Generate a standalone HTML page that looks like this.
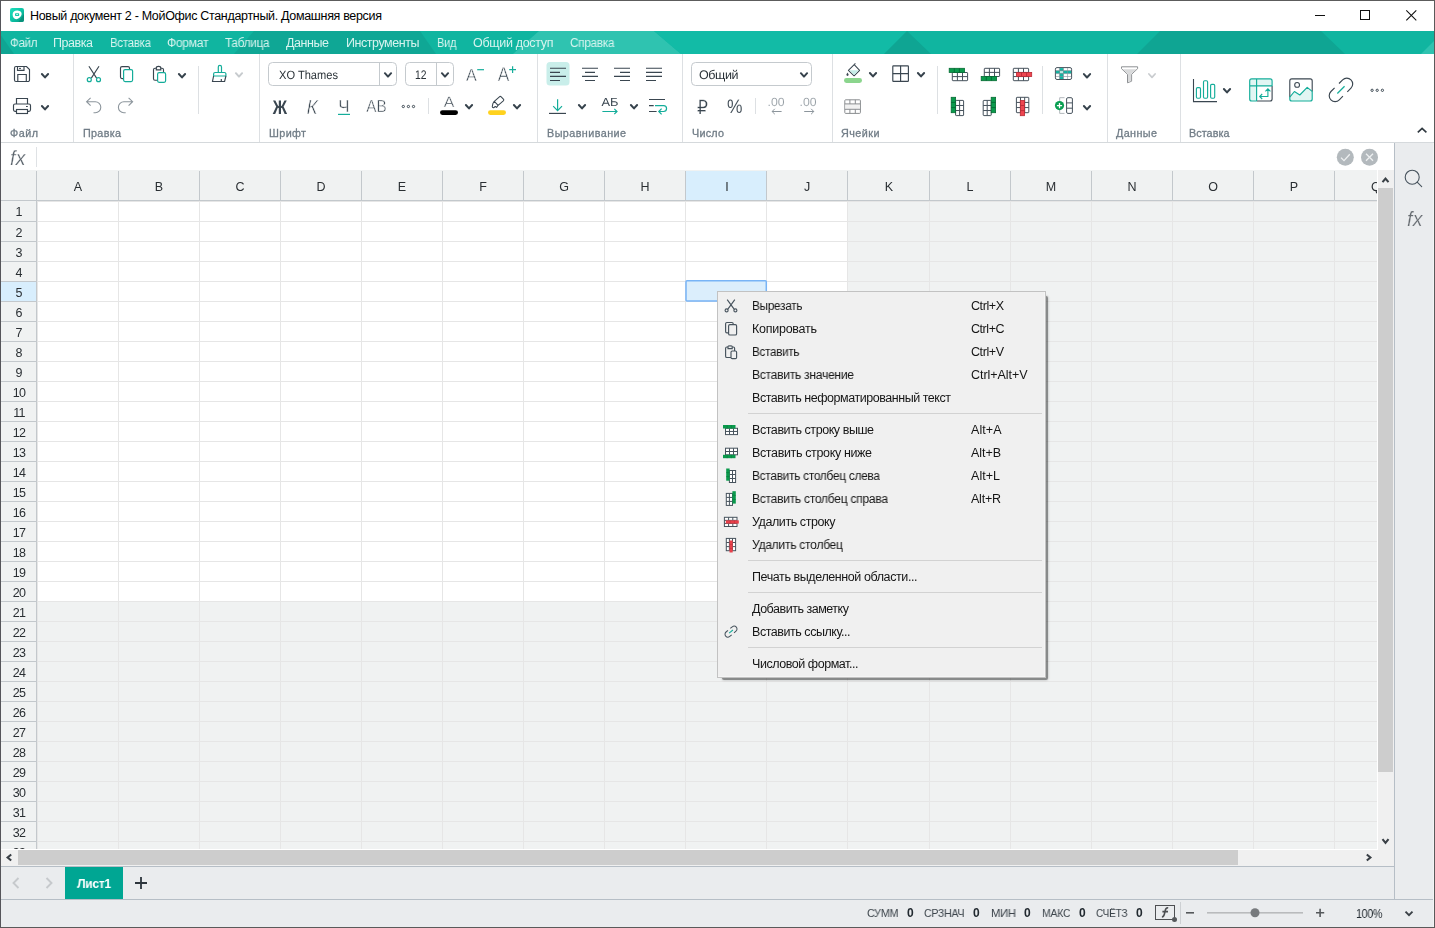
<!DOCTYPE html>
<html lang="ru"><head><meta charset="utf-8"><title>МойОфис Таблица</title>
<style>
html,body{margin:0;padding:0;}
body{width:1435px;height:928px;position:relative;overflow:hidden;background:#fff;font-family:"Liberation Sans", sans-serif;}
#app{position:absolute;left:0;top:0;width:1435px;height:928px;overflow:hidden;}
#app div, #app span.t, #app svg{position:absolute;}
span.t{white-space:nowrap;display:block;will-change:transform;}
#app svg{will-change:transform;}
#app span#t0{will-change:auto;}
svg text{text-rendering:geometricPrecision;}
svg{overflow:visible;}
</style></head><body><div id="app">
<div style="left:0px;top:0px;width:1435px;height:31px;background:#fff;"></div>
<svg style="left:10px;top:8px" width="14" height="14" viewBox="0 0 14 14">
<defs><linearGradient id="ig" x1="0" y1="0" x2="1" y2="1"><stop offset="0" stop-color="#1fe0bd"/><stop offset="0.5" stop-color="#0cc4a6"/><stop offset="1" stop-color="#069680"/></linearGradient></defs>
<rect x="0" y="0" width="14" height="14" rx="2.2" fill="url(#ig)"/><path d="M14 6 V11.8 A2.2 2.2 0 0 1 11.8 14 H8.5 Z" fill="#08917b"/>
<path d="M2.6 6.6 C2.6 3.6 4.8 2.2 7.6 2.4 C10.6 2.6 12 4.4 11.6 6.4 C11.3 8 9.5 9.8 7.8 10.8 C6.4 11.6 4.6 11.2 3.6 9.8 C2.9 8.8 2.6 7.8 2.6 6.6 Z" fill="#fff"/>
<rect x="5" y="5.2" width="4.2" height="2.8" rx="0.7" fill="#12c7a9"/><rect x="6.2" y="6.2" width="1.8" height="0.8" fill="#eafffb"/>
</svg>
<div style="left:1315px;top:15px;width:10px;height:1px;background:#111;"></div>
<div style="left:1360px;top:10px;width:10px;height:10px;background:transparent;border:1px solid #111;box-sizing:border-box;"></div>
<svg style="left:1405.5px;top:10px" width="11" height="11" viewBox="0 0 11 11"><path d="M0.3 0.3 L10.3 10.3 M10.3 0.3 L0.3 10.3" stroke="#111" stroke-width="1.1" fill="none"/></svg>
<div style="left:0px;top:31px;width:1435px;height:23px;background:#10b5a0;"></div>
<svg style="left:0;top:31px" width="1435" height="23" viewBox="0 0 1435 23">
<polygon points="0,3 0,23 14,23" fill="#0fa593"/>
<polygon points="254,0 420,0 436,23 234,23" fill="#0fa593" opacity="0.9"/>
<polygon points="539,0 654,0 681,23 513,23" fill="#2fc3b0"/>
<polygon points="654,0 907,0 884,23 681,23" fill="#12bba6"/>
<polygon points="907,0 931,23 884,23" fill="#0fa593"/>
<polygon points="1160,0 1321,0 1345,23 1137,23" fill="#0fa593"/>
<polygon points="1435,9 1435,23 1421,23" fill="#2fc3b0"/>
</svg>
<div style="left:0px;top:54px;width:1435px;height:88px;background:#fff;"></div>
<div style="left:0px;top:142px;width:1435px;height:1px;background:#d5d9dc;"></div>
<div style="left:73px;top:54px;width:1px;height:88px;background:#dde0e3;"></div>
<div style="left:259px;top:54px;width:1px;height:88px;background:#dde0e3;"></div>
<div style="left:537px;top:54px;width:1px;height:88px;background:#dde0e3;"></div>
<div style="left:682px;top:54px;width:1px;height:88px;background:#dde0e3;"></div>
<div style="left:832px;top:54px;width:1px;height:88px;background:#dde0e3;"></div>
<div style="left:1107px;top:54px;width:1px;height:88px;background:#dde0e3;"></div>
<div style="left:1180px;top:54px;width:1px;height:88px;background:#dde0e3;"></div>
<div style="left:198px;top:66px;width:1px;height:48px;background:#dde0e3;"></div>
<div style="left:937px;top:66px;width:1px;height:48px;background:#dde0e3;"></div>
<div style="left:1042px;top:66px;width:1px;height:48px;background:#dde0e3;"></div>
<div style="left:428px;top:98px;width:1px;height:16px;background:#dde0e3;"></div>
<div style="left:755px;top:98px;width:1px;height:16px;background:#dde0e3;"></div>
<svg style="left:0;top:54px" width="1435" height="88" viewBox="0 54 1435 88"><path d="M16 66.5 H26.5 L29.5 69.5 V80 A1.5 1.5 0 0 1 28 81.5 H16 A1.5 1.5 0 0 1 14.5 80 V68 A1.5 1.5 0 0 1 16 66.5 Z" fill="none" stroke="#3a4650" stroke-width="1.15"/><path d="M17.5 66.5 V70.3 H24 V66.5" fill="none" stroke="#3a4650" stroke-width="1.15"/><path d="M19 68.4 H21" stroke="#3a4650" stroke-width="1"/><path d="M17.8 81.5 V74.5 H26.3 V81.5" fill="none" stroke="#3a4650" stroke-width="1.15"/><path d="M41.9 74.0 L45.0 77.4 L48.1 74.0" stroke="#36424c" stroke-width="2" fill="none" stroke-linecap="round" stroke-linejoin="round"/><path d="M16.5 104 V98.5 H27.5 V104" fill="none" stroke="#3a4650" stroke-width="1.15"/><path d="M16.5 111.3 H15 A1.5 1.5 0 0 1 13.5 109.8 V105.5 A1.5 1.5 0 0 1 15 104 H29 A1.5 1.5 0 0 1 30.5 105.5 V109.8 A1.5 1.5 0 0 1 29 111.3 H27.5" fill="none" stroke="#3a4650" stroke-width="1.15"/><rect x="16.5" y="109.5" width="11" height="4" fill="none" stroke="#3a4650" stroke-width="1.15"/><path d="M26 106.5 H27.8" stroke="#3a4650" stroke-width="1"/><path d="M41.9 106.0 L45.0 109.4 L48.1 106.0" stroke="#36424c" stroke-width="2" fill="none" stroke-linecap="round" stroke-linejoin="round"/><path d="M88.9 66.2 L96.6 78.1 M99 66.2 L91.3 78.1" stroke="#3a4650" stroke-width="1.15" fill="none"/><circle cx="89.3" cy="79.7" r="2" fill="none" stroke="#14ad9a" stroke-width="1.2"/><circle cx="98.5" cy="79.7" r="2" fill="none" stroke="#14ad9a" stroke-width="1.2"/><rect x="120.5" y="66.6" width="9" height="12" rx="1.5" fill="none" stroke="#3a4650" stroke-width="1.15"/><rect x="123.6" y="69.6" width="9" height="12" rx="1.5" fill="#fff" stroke="#14ad9a" stroke-width="1.2"/><rect x="153.5" y="68.2" width="10" height="12" rx="1.5" fill="none" stroke="#3a4650" stroke-width="1.15"/><path d="M156.3 69.8 V68 C156.3 65.8 160.8 65.8 160.8 68 V69.8 Z" fill="#fff" stroke="#3a4650" stroke-width="1.15"/><rect x="157.6" y="72.7" width="8" height="9.6" rx="1.5" fill="#fff" stroke="#14ad9a" stroke-width="1.2"/><path d="M178.9 74.0 L182.0 77.4 L185.1 74.0" stroke="#36424c" stroke-width="2" fill="none" stroke-linecap="round" stroke-linejoin="round"/><path d="M218.3 72.5 V67 A1.6 1.6 0 0 1 221.5 67 V72.5" fill="none" stroke="#14ad9a" stroke-width="1.2"/><path d="M213.6 76 V74 A1.5 1.5 0 0 1 215.1 72.5 H224.4 A1.5 1.5 0 0 1 225.9 74 V76 Z" fill="none" stroke="#14ad9a" stroke-width="1.2"/><path d="M213.6 76 L212.5 81.5 H224.6 L225.9 76 M221.3 81.5 V79" fill="none" stroke="#3a4650" stroke-width="1.15"/><path d="M235.9 73.2 L239.0 76.60000000000001 L242.1 73.2" stroke="#c7cbce" stroke-width="2" fill="none" stroke-linecap="round" stroke-linejoin="round"/><path d="M90.6 97.8 L86.6 101.7 L90.6 105.6 M86.8 101.7 H95.3 A5.5 5.5 0 0 1 95.3 112.7 H93.5" fill="none" stroke="#8c959c" stroke-width="1.1"/><path d="M128.6 97.8 L132.6 101.7 L128.6 105.6 M132.4 101.7 H123.9 A5.5 5.5 0 0 0 123.9 112.7 H125.7" fill="none" stroke="#8c959c" stroke-width="1.1"/><rect x="268.5" y="62.5" width="128" height="23" rx="4" fill="#fff" stroke="#c5cace" stroke-width="1"/><path d="M379.5 63 V85" stroke="#c5cace" stroke-width="1"/><text x="279" y="78.8" font-family="Liberation Sans, sans-serif" font-size="12" font-weight="normal" font-style="normal" fill="#2a3238" text-anchor="start" textLength="59" lengthAdjust="spacingAndGlyphs">XO Thames</text><path d="M384.9 73.2 L388.0 76.60000000000001 L391.1 73.2" stroke="#36424c" stroke-width="2" fill="none" stroke-linecap="round" stroke-linejoin="round"/><rect x="405.5" y="62.5" width="48" height="23" rx="4" fill="#fff" stroke="#c5cace" stroke-width="1"/><path d="M436.5 63 V85" stroke="#c5cace" stroke-width="1"/><text x="415" y="78.8" font-family="Liberation Sans, sans-serif" font-size="12.5" font-weight="normal" font-style="normal" fill="#2a3238" text-anchor="start" textLength="11.5" lengthAdjust="spacingAndGlyphs">12</text><path d="M441.9 73.2 L445.0 76.60000000000001 L448.1 73.2" stroke="#36424c" stroke-width="2" fill="none" stroke-linecap="round" stroke-linejoin="round"/><text x="471.5" y="81.4" font-family="Liberation Sans, sans-serif" font-size="17.5" font-weight="normal" font-style="normal" fill="#3a4650" text-anchor="middle" stroke="#fff" stroke-width="0.5" textLength="10.8" lengthAdjust="spacingAndGlyphs">A</text><path d="M477.2 69.7 H484" stroke="#14ad9a" stroke-width="1.2"/><text x="503.5" y="81.4" font-family="Liberation Sans, sans-serif" font-size="20" font-weight="normal" font-style="normal" fill="#3a4650" text-anchor="middle" stroke="#fff" stroke-width="0.6" textLength="11.6" lengthAdjust="spacingAndGlyphs">A</text><path d="M509.2 69.7 H516 M512.6 66.3 V73.1" stroke="#14ad9a" stroke-width="1.2"/><text x="280" y="113.7" font-family="Liberation Sans, sans-serif" font-size="19.8" font-weight="bold" font-style="normal" fill="#3a4650" text-anchor="middle" textLength="14.3" lengthAdjust="spacingAndGlyphs">Ж</text><text x="312" y="113.6" font-family="Liberation Sans, sans-serif" font-size="20.3" font-weight="normal" font-style="italic" fill="#3a4650" text-anchor="middle" stroke="#fff" stroke-width="0.6" textLength="11.2" lengthAdjust="spacingAndGlyphs">К</text><text x="344" y="111.5" font-family="Liberation Sans, sans-serif" font-size="17.6" font-weight="normal" font-style="normal" fill="#3a4650" text-anchor="middle" stroke="#fff" stroke-width="0.5" textLength="11.3" lengthAdjust="spacingAndGlyphs">Ч</text><path d="M338 114.4 H350" stroke="#14ad9a" stroke-width="1.2"/><text x="376.5" y="111.6" font-family="Liberation Sans, sans-serif" font-size="17.4" font-weight="normal" font-style="normal" fill="#3a4650" text-anchor="middle" stroke="#fff" stroke-width="0.5" textLength="20.4" lengthAdjust="spacingAndGlyphs">АВ</text><circle cx="403.3" cy="106.5" r="1.15" fill="none" stroke="#3a4650" stroke-width="1"/><circle cx="408.4" cy="106.5" r="1.15" fill="none" stroke="#3a4650" stroke-width="1"/><circle cx="413.5" cy="106.5" r="1.15" fill="none" stroke="#3a4650" stroke-width="1"/><text x="449" y="107.3" font-family="Liberation Sans, sans-serif" font-size="15" font-weight="normal" font-style="normal" fill="#3a4650" text-anchor="middle" stroke="#fff" stroke-width="0.4" textLength="10.6" lengthAdjust="spacingAndGlyphs">A</text><rect x="440" y="110.2" width="18" height="4.7" rx="2.35" fill="#000"/><path d="M465.9 105.0 L469.0 108.4 L472.1 105.0" stroke="#36424c" stroke-width="2" fill="none" stroke-linecap="round" stroke-linejoin="round"/><path d="M494.3 101.3 L499.4 96.8 Q500.3 96 501.2 96.9 L503.4 99.2 Q504.2 100.1 503.3 100.9 L498.1 105.3 Z M494.3 101.3 L492.9 103.6 L492.3 106.3 Q492.2 107.8 493.6 107.7 L495.3 106.5 L496.6 107.4 L498.1 105.3" fill="none" stroke="#3a4650" stroke-width="1.05" stroke-linejoin="round"/><rect x="488" y="110.2" width="18" height="4.7" rx="2.35" fill="#ffd21e"/><path d="M513.9 105.0 L517.0 108.4 L520.1 105.0" stroke="#36424c" stroke-width="2" fill="none" stroke-linecap="round" stroke-linejoin="round"/><rect x="546.5" y="62" width="23" height="23.5" rx="3.5" fill="#c9eeea"/><path d="M550 68.2 H566 M550 72.3 H560 M550 76.4 H566 M550 80.5 H560 " stroke="#3a4650" stroke-width="1.15" fill="none"/><path d="M582 68.2 H598 M585 72.3 H595 M582 76.4 H598 M585 80.5 H595 " stroke="#3a4650" stroke-width="1.15" fill="none"/><path d="M614 68.2 H630 M620 72.3 H630 M614 76.4 H630 M620 80.5 H630 " stroke="#3a4650" stroke-width="1.15" fill="none"/><path d="M646 68.2 H662 M646 72.3 H662 M646 76.4 H662 M646 80.5 H656 " stroke="#3a4650" stroke-width="1.15" fill="none"/><path d="M557.6 99.2 V110.5 M553.2 106.2 L557.6 110.6 L562 106.2" stroke="#14ad9a" stroke-width="1.2" fill="none"/><path d="M549 113.4 H566" stroke="#3a4650" stroke-width="1.15"/><path d="M578.9 105.0 L582.0 108.4 L585.1 105.0" stroke="#36424c" stroke-width="2" fill="none" stroke-linecap="round" stroke-linejoin="round"/><text x="610" y="106.2" font-family="Liberation Sans, sans-serif" font-size="11.8" font-weight="normal" font-style="normal" fill="#3a4650" text-anchor="middle" textLength="17" lengthAdjust="spacingAndGlyphs">АБ</text><path d="M602.4 111.5 H617 M614.3 108.9 L617 111.5 L614.3 114.1" stroke="#14ad9a" stroke-width="1.2" fill="none"/><path d="M630.9 105.0 L634.0 108.4 L637.1 105.0" stroke="#36424c" stroke-width="2" fill="none" stroke-linecap="round" stroke-linejoin="round"/><path d="M649 99.5 H665 M649 105.6 H653.7 M649 111.5 H656.6" stroke="#3a4650" stroke-width="1.15" fill="none"/><path d="M655 105.6 H663.6 A2.95 2.95 0 0 1 663.6 111.5 H659 M661.6 108.7 L658.8 111.5 L661.6 114.3" stroke="#14ad9a" stroke-width="1.2" fill="none"/><rect x="691.5" y="62.5" width="120" height="23" rx="4" fill="#fff" stroke="#c5cace" stroke-width="1"/><text x="699" y="78.8" font-family="Liberation Sans, sans-serif" font-size="12.5" font-weight="normal" font-style="normal" fill="#2a3238" text-anchor="start" textLength="39.5" lengthAdjust="spacing">Общий</text><path d="M800.9 73.2 L804.0 76.60000000000001 L807.1 73.2" stroke="#36424c" stroke-width="2" fill="none" stroke-linecap="round" stroke-linejoin="round"/><text x="702.5" y="113.8" font-family="DejaVu Sans, sans-serif" font-size="19.5" fill="#3a4650" text-anchor="middle" textLength="11" lengthAdjust="spacingAndGlyphs" stroke="#fff" stroke-width="0.25">₽</text><text x="734.7" y="113" font-family="Liberation Sans, sans-serif" font-size="19.5" font-weight="normal" font-style="normal" fill="#3a4650" text-anchor="middle" stroke="#fff" stroke-width="0.1" textLength="15.5" lengthAdjust="spacingAndGlyphs">%</text><text x="776" y="106.2" font-family="Liberation Sans, sans-serif" font-size="12" font-weight="normal" font-style="normal" fill="#8c959c" text-anchor="middle" stroke="#fff" stroke-width="0.15" textLength="17" lengthAdjust="spacingAndGlyphs">.00</text><path d="M772.1 111.5 H781.6 M774.8 108.8 L772.1 111.5 L774.8 114.2" stroke="#8c959c" stroke-width="1" fill="none"/><text x="808" y="106.2" font-family="Liberation Sans, sans-serif" font-size="12" font-weight="normal" font-style="normal" fill="#8c959c" text-anchor="middle" stroke="#fff" stroke-width="0.15" textLength="17" lengthAdjust="spacingAndGlyphs">.00</text><path d="M804.2 111.5 H813.8 M811.1 108.8 L813.8 111.5 L811.1 114.2" stroke="#8c959c" stroke-width="1" fill="none"/><path d="M848.4 70.4 L854.2 64.7 L859.6 70.4 L854.1 75.8 Z" fill="#fff" stroke="#3a4650" stroke-width="1.05" stroke-linejoin="round"/><path d="M849.3 70.3 H858.7 L854.1 74.9 Z" fill="#c4ece7"/><path d="M854.2 64.7 L855.4 63.4" stroke="#3a4650" stroke-width="1.05"/><path d="M847.5 72.4 C846.6 73.8 846.4 74.4 846.4 74.8 A1.1 1.1 0 0 0 848.6 74.8 C848.6 74.4 848.4 73.8 847.5 72.4 Z" fill="#3a4650"/><rect x="844" y="78.1" width="18" height="4.8" rx="2.4" fill="#8bd58d"/><path d="M869.9 73.0 L873.0 76.4 L876.1 73.0" stroke="#36424c" stroke-width="2" fill="none" stroke-linecap="round" stroke-linejoin="round"/><rect x="892.8" y="65.8" width="15.6" height="15.6" rx="0.6" fill="none" stroke="#3a4650" stroke-width="1.15"/><path d="M900.6 65.8 V81.4 M892.8 73.6 H908.4" stroke="#3a4650" stroke-width="1.15"/><path d="M917.9 73.0 L921.0 76.4 L924.1 73.0" stroke="#36424c" stroke-width="2" fill="none" stroke-linecap="round" stroke-linejoin="round"/><rect x="844.8" y="99.8" width="15.6" height="13.6" rx="0.8" fill="#fff" stroke="#8a8d90" stroke-width="1"/><rect x="845.3" y="104.2" width="14.6" height="4.8" fill="#f1f1f1"/><path d="M844.8 103.9 H860.4 M844.8 109.3 H860.4 M849.9 99.8 V103.9 M855.3 99.8 V103.9 M849.9 109.3 V113.4 M855.3 109.3 V113.4" stroke="#8a8d90" stroke-width="1" fill="none"/><rect x="952.3" y="72.5" width="15.3" height="8.2" rx="0.6" fill="#fff" stroke="#46525c" stroke-width="1.0"/><path d="M957.40 72.5 V80.7 M962.50 72.5 V80.7 M952.3 76.60 H967.5999999999999 " stroke="#46525c" stroke-width="1.0" fill="none"/><rect x="949.2" y="68.3" width="15.3" height="4.2" fill="#0a9a4c" stroke="#056b33" stroke-width="0.8"/><path d="M954.30 68.3 V72.5 M959.40 68.3 V72.5 " stroke="#056b33" stroke-width="0.9" fill="none"/><rect x="984.3" y="68.3" width="15.3" height="8.2" rx="0.6" fill="#fff" stroke="#46525c" stroke-width="1.0"/><path d="M989.40 68.3 V76.5 M994.50 68.3 V76.5 M984.3 72.40 H999.5999999999999 " stroke="#46525c" stroke-width="1.0" fill="none"/><rect x="981.2" y="76.5" width="15.3" height="4.2" fill="#0a9a4c" stroke="#056b33" stroke-width="0.8"/><path d="M986.30 76.5 V80.7 M991.40 76.5 V80.7 " stroke="#056b33" stroke-width="0.9" fill="none"/><rect x="1013.3" y="68.3" width="15.3" height="12.4" rx="0.6" fill="#fff" stroke="#46525c" stroke-width="1.0"/><path d="M1018.40 68.3 V80.7 M1023.50 68.3 V80.7 M1013.3 72.43 H1028.6 M1013.3 76.57 H1028.6 " stroke="#46525c" stroke-width="1.0" fill="none"/><rect x="1016.4" y="72.4" width="15.3" height="4.2" fill="#ee4650" stroke="#b82a35" stroke-width="0.8"/><path d="M1021.50 72.4 V76.60000000000001 M1026.60 72.4 V76.60000000000001 " stroke="#b82a35" stroke-width="0.9" fill="none"/><rect x="1055.4" y="67.6" width="16.2" height="11.9" rx="1.6" fill="#fff" stroke="#46525c" stroke-width="1"/><rect x="1059.5" y="68.1" width="4" height="10.9" fill="#12b3a0"/><rect x="1055.9" y="70.6" width="15.2" height="3" fill="#12b3a0"/><rect x="1060" y="71" width="3" height="2.2" fill="#bfe9e4"/><path d="M1059.45 68 V79 M1063.5 68 V79 M1067.55 68 V79 M1055.9 70.6 H1071.1 M1055.9 73.6 H1071.1 M1055.9 76.5 H1071.1" stroke="#87919a" stroke-width="0.6" fill="none"/><path d="M1083.9 74.1 L1087.0 77.5 L1090.1 74.1" stroke="#36424c" stroke-width="2" fill="none" stroke-linecap="round" stroke-linejoin="round"/><rect x="955.6" y="100.4" width="8" height="15.2" rx="0.6" fill="#fff" stroke="#46525c" stroke-width="1.0"/><path d="M959.60 100.4 V115.60000000000001 M955.6 105.47 H963.6 M955.6 110.53 H963.6 " stroke="#46525c" stroke-width="1.0" fill="none"/><rect x="951.2" y="97.3" width="4.4" height="15.4" fill="#0a9a4c" stroke="#056b33" stroke-width="0.8"/><path d="M951.2 102.43 H955.6 M951.2 107.57 H955.6 " stroke="#056b33" stroke-width="0.9" fill="none"/><rect x="983.2" y="100.4" width="8" height="15.2" rx="0.6" fill="#fff" stroke="#46525c" stroke-width="1.0"/><path d="M987.20 100.4 V115.60000000000001 M983.2 105.47 H991.2 M983.2 110.53 H991.2 " stroke="#46525c" stroke-width="1.0" fill="none"/><rect x="991.2" y="97.3" width="4.4" height="15.4" fill="#0a9a4c" stroke="#056b33" stroke-width="0.8"/><path d="M991.2 102.43 H995.6 M991.2 107.57 H995.6 " stroke="#056b33" stroke-width="0.9" fill="none"/><rect x="1016.4" y="97.3" width="12.4" height="15.4" rx="0.6" fill="#fff" stroke="#46525c" stroke-width="1.0"/><path d="M1020.53 97.3 V112.7 M1024.67 97.3 V112.7 M1016.4 102.43 H1028.8 M1016.4 107.57 H1028.8 " stroke="#46525c" stroke-width="1.0" fill="none"/><rect x="1020.3" y="100.4" width="4.3" height="15.3" fill="#ee4650" stroke="#b82a35" stroke-width="0.8"/><path d="M1020.3 105.50 H1024.6 M1020.3 110.60 H1024.6 " stroke="#b82a35" stroke-width="0.9" fill="none"/><path d="M1064.5 97.7 H1059.7 V113.4 H1064.5" fill="none" stroke="#a9afb4" stroke-width="0.9"/><rect x="1066.6" y="97.7" width="5.8" height="15.7" rx="1.3" fill="#fff" stroke="#46525c" stroke-width="1"/><path d="M1066.6 102.9 H1072.4 M1066.6 108.2 H1072.4" stroke="#46525c" stroke-width="1"/><circle cx="1059.5" cy="105.6" r="4.6" fill="#0a9f52"/><path d="M1056.9 105.6 H1062.1 M1059.5 103 V108.2" stroke="#fff" stroke-width="1.3"/><path d="M1083.9 106.0 L1087.0 109.4 L1090.1 106.0" stroke="#36424c" stroke-width="2" fill="none" stroke-linecap="round" stroke-linejoin="round"/><path d="M1121.5 66.8 H1137.6 V68.7 L1131.6 74.3 V81.2 L1127.5 82.8 V74.3 L1121.5 68.7 Z" fill="#fff" stroke="#8d9093" stroke-width="1" stroke-linejoin="round"/><path d="M1122.6 69.2 H1136.5 L1131.1 74.1 V80.9 L1128 82.1 V74.1 Z" fill="#d9dadb"/><path d="M1148.9 74.0 L1152.0 77.4 L1155.1 74.0" stroke="#c9cccf" stroke-width="1.7" fill="none" stroke-linecap="round" stroke-linejoin="round"/><path d="M1193.5 79 V101.6 H1217" fill="none" stroke="#3a4650" stroke-width="1.1"/><rect x="1196.4" y="87.6" width="4.1" height="10.6" rx="1.2" fill="none" stroke="#14ad9a" stroke-width="1.15"/><rect x="1203.5" y="80.7" width="4.1" height="17.5" rx="1.2" fill="none" stroke="#14ad9a" stroke-width="1.15"/><rect x="1210.6" y="84.4" width="4.1" height="13.8" rx="1.2" fill="none" stroke="#14ad9a" stroke-width="1.15"/><path d="M1223.9 89.0 L1227.0 92.4 L1230.1 89.0" stroke="#36424c" stroke-width="2" fill="none" stroke-linecap="round" stroke-linejoin="round"/><path d="M1256.6 101 H1251.7 A2 2 0 0 1 1249.7 99 V80.9 A2 2 0 0 1 1251.7 78.9 H1270.1 A2 2 0 0 1 1272.1 80.9 V85.9 H1256.6 Z" fill="#e2f6f3"/><path d="M1272.1 85.9 V99 A2 2 0 0 1 1270.1 101 H1256.6" fill="none" stroke="#3a4650" stroke-width="1.1"/><path d="M1256.6 101 H1251.7 A2 2 0 0 1 1249.7 99 V80.9 A2 2 0 0 1 1251.7 78.9 H1270.1 A2 2 0 0 1 1272.1 80.9 V85.9 M1256.6 78.9 V101 M1249.7 85.9 H1272.1" fill="none" stroke="#14ad9a" stroke-width="1.15"/><path d="M1267.9 89 V96.5 H1259.8 M1265.4 91.4 L1267.9 88.9 L1270.4 91.4 M1262.2 94 L1259.7 96.5 L1262.2 99" fill="none" stroke="#14ad9a" stroke-width="1.1"/><path d="M1289.8 97.2 L1294.4 91.5 L1299.8 95 L1307.2 87.4 L1312.2 91.4 V99 A2 2 0 0 1 1310.2 101 H1291.8 A2 2 0 0 1 1289.8 99 Z" fill="#e2f6f3"/><path d="M1289.8 97.2 V80.9 A2 2 0 0 1 1291.8 78.9 H1310.2 A2 2 0 0 1 1312.2 80.9 V91.4" fill="none" stroke="#3a4650" stroke-width="1.1"/><circle cx="1297.1" cy="84.9" r="2.4" fill="none" stroke="#3a4650" stroke-width="1.05"/><path d="M1289.8 97.2 L1294.4 91.5 L1299.8 95 L1307.2 87.4 L1312.2 91.4 V99 A2 2 0 0 1 1310.2 101 H1291.8 A2 2 0 0 1 1289.8 99 Z" fill="none" stroke="#14ad9a" stroke-width="1.15" stroke-linejoin="round"/><g transform="translate(1340.95 89.85) rotate(-45)"><path d="M3.1 -5.9 H8.27 A5.9 5.9 0 0 1 8.27 5.9 H3.1 M-3.1 5.9 H-8.27 A5.9 5.9 0 0 1 -8.27 -5.9 H-3.1" fill="none" stroke="#3a4650" stroke-width="1.15"/><path d="M-5.1 0 H5.1" stroke="#14ad9a" stroke-width="1.2"/></g><circle cx="1372.1" cy="90.3" r="1.15" fill="none" stroke="#3a4650" stroke-width="1"/><circle cx="1377.2" cy="90.3" r="1.15" fill="none" stroke="#3a4650" stroke-width="1"/><circle cx="1382.4" cy="90.3" r="1.15" fill="none" stroke="#3a4650" stroke-width="1"/><path d="M1417.8 132.4 L1422.1 128.3 L1426.4 132.4" fill="none" stroke="#2f383f" stroke-width="1.6"/></svg>
<div style="left:0px;top:143px;width:1394px;height:27px;background:#fff;"></div>
<div style="left:36px;top:147px;width:1px;height:20px;background:#dfe2e5;"></div>
<svg style="left:1336px;top:148px" width="44" height="19" viewBox="1336 148 44 19"><circle cx="1345.3" cy="157.3" r="8.5" fill="#b3b9bd"/><path d="M1341 157.6 L1344 160.6 L1349.8 154.2" stroke="#eef0f1" stroke-width="1.3" fill="none"/><circle cx="1369.5" cy="157.3" r="8.5" fill="#b3b9bd"/><path d="M1366 153.8 L1373 160.8 M1373 153.8 L1366 160.8" stroke="#eef0f1" stroke-width="1.3" fill="none"/></svg>
<div style="left:1394px;top:143px;width:41px;height:757px;background:#eaecee;"></div>
<div style="left:1394px;top:143px;width:1px;height:757px;background:#b6bec6;"></div>
<svg style="left:1400px;top:165px" width="30" height="70" viewBox="1400 165 30 70"><circle cx="1412.2" cy="177.2" r="7" fill="none" stroke="#47535d" stroke-width="1.1"/><path d="M1417.2 182.2 L1421.7 186.7" stroke="#47535d" stroke-width="1.1" stroke-linecap="round"/></svg>
<div style="left:0px;top:170px;width:1377px;height:679px;background:#f0f2f2;"></div>
<div style="left:38px;top:202px;width:809px;height:399px;background:#fff;"></div>
<div style="left:686px;top:171px;width:80px;height:29px;background:#d8eefd;"></div>
<div style="left:1px;top:282px;width:35px;height:19px;background:#d8eefd;"></div>
<svg style="left:0;top:170px" width="1377" height="679" viewBox="0 170 1377 679" shape-rendering="crispEdges"><rect x="37" y="201" width="1" height="648" fill="#e6e6e6"/><rect x="118" y="201" width="1" height="648" fill="#e6e6e6"/><rect x="199" y="201" width="1" height="648" fill="#e6e6e6"/><rect x="280" y="201" width="1" height="648" fill="#e6e6e6"/><rect x="361" y="201" width="1" height="648" fill="#e6e6e6"/><rect x="442" y="201" width="1" height="648" fill="#e6e6e6"/><rect x="523" y="201" width="1" height="648" fill="#e6e6e6"/><rect x="604" y="201" width="1" height="648" fill="#e6e6e6"/><rect x="685" y="201" width="1" height="648" fill="#e6e6e6"/><rect x="766" y="201" width="1" height="648" fill="#e6e6e6"/><rect x="847" y="201" width="1" height="648" fill="#e6e6e6"/><rect x="929" y="201" width="1" height="648" fill="#e6e6e6"/><rect x="1010" y="201" width="1" height="648" fill="#e6e6e6"/><rect x="1091" y="201" width="1" height="648" fill="#e6e6e6"/><rect x="1172" y="201" width="1" height="648" fill="#e6e6e6"/><rect x="1253" y="201" width="1" height="648" fill="#e6e6e6"/><rect x="1334" y="201" width="1" height="648" fill="#e6e6e6"/><rect x="37" y="201" width="1340" height="1" fill="#e6e6e6"/><rect x="37" y="221" width="1340" height="1" fill="#e6e6e6"/><rect x="37" y="241" width="1340" height="1" fill="#e6e6e6"/><rect x="37" y="261" width="1340" height="1" fill="#e6e6e6"/><rect x="37" y="281" width="1340" height="1" fill="#e6e6e6"/><rect x="37" y="301" width="1340" height="1" fill="#e6e6e6"/><rect x="37" y="321" width="1340" height="1" fill="#e6e6e6"/><rect x="37" y="341" width="1340" height="1" fill="#e6e6e6"/><rect x="37" y="361" width="1340" height="1" fill="#e6e6e6"/><rect x="37" y="381" width="1340" height="1" fill="#e6e6e6"/><rect x="37" y="401" width="1340" height="1" fill="#e6e6e6"/><rect x="37" y="421" width="1340" height="1" fill="#e6e6e6"/><rect x="37" y="441" width="1340" height="1" fill="#e6e6e6"/><rect x="37" y="461" width="1340" height="1" fill="#e6e6e6"/><rect x="37" y="481" width="1340" height="1" fill="#e6e6e6"/><rect x="37" y="501" width="1340" height="1" fill="#e6e6e6"/><rect x="37" y="521" width="1340" height="1" fill="#e6e6e6"/><rect x="37" y="541" width="1340" height="1" fill="#e6e6e6"/><rect x="37" y="561" width="1340" height="1" fill="#e6e6e6"/><rect x="37" y="581" width="1340" height="1" fill="#e6e6e6"/><rect x="37" y="601" width="1340" height="1" fill="#e6e6e6"/><rect x="37" y="621" width="1340" height="1" fill="#e6e6e6"/><rect x="37" y="641" width="1340" height="1" fill="#e6e6e6"/><rect x="37" y="661" width="1340" height="1" fill="#e6e6e6"/><rect x="37" y="681" width="1340" height="1" fill="#e6e6e6"/><rect x="37" y="701" width="1340" height="1" fill="#e6e6e6"/><rect x="37" y="721" width="1340" height="1" fill="#e6e6e6"/><rect x="37" y="741" width="1340" height="1" fill="#e6e6e6"/><rect x="37" y="761" width="1340" height="1" fill="#e6e6e6"/><rect x="37" y="781" width="1340" height="1" fill="#e6e6e6"/><rect x="37" y="801" width="1340" height="1" fill="#e6e6e6"/><rect x="37" y="821" width="1340" height="1" fill="#e6e6e6"/><rect x="37" y="841" width="1340" height="1" fill="#e6e6e6"/><rect x="118" y="171" width="1" height="30" fill="#c3c8cc"/><rect x="199" y="171" width="1" height="30" fill="#c3c8cc"/><rect x="280" y="171" width="1" height="30" fill="#c3c8cc"/><rect x="361" y="171" width="1" height="30" fill="#c3c8cc"/><rect x="442" y="171" width="1" height="30" fill="#c3c8cc"/><rect x="523" y="171" width="1" height="30" fill="#c3c8cc"/><rect x="604" y="171" width="1" height="30" fill="#c3c8cc"/><rect x="685" y="171" width="1" height="30" fill="#c3c8cc"/><rect x="766" y="171" width="1" height="30" fill="#c3c8cc"/><rect x="847" y="171" width="1" height="30" fill="#c3c8cc"/><rect x="929" y="171" width="1" height="30" fill="#c3c8cc"/><rect x="1010" y="171" width="1" height="30" fill="#c3c8cc"/><rect x="1091" y="171" width="1" height="30" fill="#c3c8cc"/><rect x="1172" y="171" width="1" height="30" fill="#c3c8cc"/><rect x="1253" y="171" width="1" height="30" fill="#c3c8cc"/><rect x="1334" y="171" width="1" height="30" fill="#c3c8cc"/><rect x="36" y="171" width="1" height="678" fill="#c3c8cc"/><rect x="1" y="200" width="1376" height="1" fill="#c3c8cc"/><rect x="1" y="221" width="36" height="1" fill="#c3c8cc"/><rect x="1" y="241" width="36" height="1" fill="#c3c8cc"/><rect x="1" y="261" width="36" height="1" fill="#c3c8cc"/><rect x="1" y="281" width="36" height="1" fill="#c3c8cc"/><rect x="1" y="301" width="36" height="1" fill="#c3c8cc"/><rect x="1" y="321" width="36" height="1" fill="#c3c8cc"/><rect x="1" y="341" width="36" height="1" fill="#c3c8cc"/><rect x="1" y="361" width="36" height="1" fill="#c3c8cc"/><rect x="1" y="381" width="36" height="1" fill="#c3c8cc"/><rect x="1" y="401" width="36" height="1" fill="#c3c8cc"/><rect x="1" y="421" width="36" height="1" fill="#c3c8cc"/><rect x="1" y="441" width="36" height="1" fill="#c3c8cc"/><rect x="1" y="461" width="36" height="1" fill="#c3c8cc"/><rect x="1" y="481" width="36" height="1" fill="#c3c8cc"/><rect x="1" y="501" width="36" height="1" fill="#c3c8cc"/><rect x="1" y="521" width="36" height="1" fill="#c3c8cc"/><rect x="1" y="541" width="36" height="1" fill="#c3c8cc"/><rect x="1" y="561" width="36" height="1" fill="#c3c8cc"/><rect x="1" y="581" width="36" height="1" fill="#c3c8cc"/><rect x="1" y="601" width="36" height="1" fill="#c3c8cc"/><rect x="1" y="621" width="36" height="1" fill="#c3c8cc"/><rect x="1" y="641" width="36" height="1" fill="#c3c8cc"/><rect x="1" y="661" width="36" height="1" fill="#c3c8cc"/><rect x="1" y="681" width="36" height="1" fill="#c3c8cc"/><rect x="1" y="701" width="36" height="1" fill="#c3c8cc"/><rect x="1" y="721" width="36" height="1" fill="#c3c8cc"/><rect x="1" y="741" width="36" height="1" fill="#c3c8cc"/><rect x="1" y="761" width="36" height="1" fill="#c3c8cc"/><rect x="1" y="781" width="36" height="1" fill="#c3c8cc"/><rect x="1" y="801" width="36" height="1" fill="#c3c8cc"/><rect x="1" y="821" width="36" height="1" fill="#c3c8cc"/><rect x="1" y="841" width="36" height="1" fill="#c3c8cc"/></svg>
<div style="left:1360px;top:171px;width:17px;height:29px;overflow:hidden;background:transparent"><span class="t" style="left:10.7px;top:5.7px;height:20px;line-height:20px;font-size:12.5px;color:#2a2f33">Q</span></div>
<div style="left:1px;top:842px;width:35px;height:7px;overflow:hidden;background:transparent"><span class="t" style="left:0;width:36px;text-align:center;top:1.2px;height:20px;line-height:20px;font-size:12.5px;letter-spacing:-0.7px;color:#2a2f33">33</span></div>
<svg style="left:680px;top:276px" width="92" height="30" viewBox="680 276 92 30"><rect x="686" y="280.8" width="80.3" height="20.3" rx="1" fill="#dbeefc" stroke="#78b4f6" stroke-width="1.5"/></svg>
<div style="left:0px;top:849px;width:1394px;height:17px;background:#f0f0f0;"></div>
<div style="left:0px;top:849px;width:1377px;height:1px;background:#fff;"></div>
<div style="left:1377px;top:170px;width:17px;height:696px;background:#f0f0f0;"></div>
<div style="left:1377px;top:170px;width:1px;height:680px;background:#fff;"></div>
<div style="left:1378px;top:188px;width:15px;height:584px;background:#cdcdcd;"></div>
<svg style="left:1378px;top:170px" width="16" height="690" viewBox="1378 170 16 690"><path d="M1382.5 182.2 L1385.5 178.6 L1388.5 182.2" stroke="#3a4046" stroke-width="2.1" fill="none"/><path d="M1382.5 839.2 L1385.5 842.8 L1388.5 839.2" stroke="#3a4046" stroke-width="2.1" fill="none"/></svg>
<div style="left:18px;top:850px;width:1220px;height:15px;background:#cdcdcd;"></div>
<svg style="left:0;top:849px" width="1394" height="17" viewBox="0 849 1394 17"><path d="M11.2 854.5 L7.6 857.5 L11.2 860.5" stroke="#3a4046" stroke-width="2.1" fill="none"/><path d="M1366.8 854.5 L1370.4 857.5 L1366.8 860.5" stroke="#3a4046" stroke-width="2.1" fill="none"/></svg>
<div style="left:0px;top:866px;width:1394px;height:1px;background:#b6bec6;"></div>
<div style="left:0px;top:867px;width:1394px;height:32px;background:#eaecee;"></div>
<div style="left:65px;top:867px;width:58px;height:32px;background:#00a693;"></div>
<svg style="left:0;top:867px" width="160" height="32" viewBox="0 867 160 32"><path d="M18.5 878 L13.5 883 L18.5 888" stroke="#c6c9cc" stroke-width="1.9" fill="none"/><path d="M46.5 878 L51.5 883 L46.5 888" stroke="#c6c9cc" stroke-width="1.9" fill="none"/><path d="M135 883 H147 M141 877 V889" stroke="#2d353c" stroke-width="1.8" fill="none"/></svg>
<div style="left:0px;top:899px;width:1435px;height:1px;background:#b6bec6;"></div>
<div style="left:0px;top:900px;width:1435px;height:27px;background:#eaecee;"></div>
<svg style="left:1150px;top:900px" width="285" height="27" viewBox="1150 900 285 27">
<rect x="1155.5" y="905.5" width="19" height="14" fill="none" stroke="#4d4f52" stroke-width="1"/>
<path d="M1161.9 917 C1164.2 916.9 1164.5 914 1165 911.3 C1165.4 908.6 1166.2 907.5 1168.2 907.7 M1162.4 911.6 H1168" stroke="#4d4f52" stroke-width="1.6" fill="none"/>
<circle cx="1174.5" cy="919.6" r="2.5" fill="#55585b"/>
<rect x="1180" y="902" width="1" height="22" fill="#cdd0d3"/>
<rect x="1186" y="912" width="8" height="1.6" fill="#55585b"/>
<rect x="1207" y="912" width="96" height="1.6" fill="#b9bbbd"/>
<circle cx="1255" cy="912.8" r="4.5" fill="#777a7d"/>
<path d="M1316 912.8 H1324.2 M1320.1 908.8 V916.9" stroke="#55585b" stroke-width="1.6"/>
<path d="M1405.5 911.7 L1409 915.2 L1412.5 911.7" stroke="#3a4046" stroke-width="1.9" fill="none"/>
</svg>
<div style="left:722px;top:296px;width:326px;height:384px;background:rgba(0,0,0,0.43);border-radius:2px;box-shadow:0 0 2.5px rgba(0,0,0,0.3);"></div>
<div style="left:717px;top:291px;width:329px;height:387px;background:#f0f0f0;border:1px solid #c2c2c2;box-sizing:border-box;box-shadow:inset -1px -1px 0 #f5f5f5;"></div>
<div style="left:748px;top:413px;width:294px;height:1px;background:#d2d2d2;"></div>
<div style="left:748px;top:560px;width:294px;height:1px;background:#d2d2d2;"></div>
<div style="left:748px;top:592px;width:294px;height:1px;background:#d2d2d2;"></div>
<div style="left:748px;top:647px;width:294px;height:1px;background:#d2d2d2;"></div>
<svg style="left:717px;top:291px" width="329" height="387" viewBox="717 291 329 387"><path d="M727.2 299.6 L734.3 309.3 M734.8 299.6 L727.7 309.3" stroke="#47535d" stroke-width="1.15" fill="none"/><circle cx="726.6" cy="310.4" r="1.5" fill="none" stroke="#47535d" stroke-width="1.15"/><circle cx="735.4" cy="310.4" r="1.5" fill="none" stroke="#47535d" stroke-width="1.15"/><rect x="725.6" y="322.5" width="7.6" height="10.4" rx="1.3" fill="none" stroke="#47535d" stroke-width="1.15"/><rect x="728.6" y="324.6" width="8" height="10.4" rx="1.3" fill="#f0f0f0" stroke="#47535d" stroke-width="1.15"/><rect x="725.6" y="347" width="9" height="10.5" rx="1.3" fill="none" stroke="#47535d" stroke-width="1.15"/><path d="M728 348.6 V346.6 C728 345.6 732.2 345.6 732.2 346.6 V348.6 Z" fill="#f0f0f0" stroke="#47535d" stroke-width="1.15"/><rect x="731" y="351" width="5.6" height="7.6" rx="1.2" fill="#f0f0f0" stroke="#47535d" stroke-width="1.15"/><rect x="725.5" y="428.3" width="12" height="6.3" fill="#fff" stroke="#47535d" stroke-width="1.0"/><path d="M729.50 428.3 V434.6" stroke="#47535d" stroke-width="1.0"/><path d="M733.50 428.3 V434.6" stroke="#47535d" stroke-width="1.0"/><path d="M725.5 431.45 H737.5" stroke="#47535d" stroke-width="1.0"/><rect x="723" y="425" width="12.5" height="3.5" fill="#0a9a4c"/><path d="M727.17 425 V428.5" stroke="#067a3a" stroke-width="0.6"/><path d="M731.33 425 V428.5" stroke="#067a3a" stroke-width="0.6"/><rect x="725.5" y="448.2" width="12" height="6.6" fill="#fff" stroke="#47535d" stroke-width="1.0"/><path d="M729.50 448.2 V454.8" stroke="#47535d" stroke-width="1.0"/><path d="M733.50 448.2 V454.8" stroke="#47535d" stroke-width="1.0"/><path d="M725.5 451.50 H737.5" stroke="#47535d" stroke-width="1.0"/><rect x="723" y="454.8" width="12.5" height="3.4" fill="#0a9a4c"/><path d="M727.17 454.8 V458.2" stroke="#067a3a" stroke-width="0.6"/><path d="M731.33 454.8 V458.2" stroke="#067a3a" stroke-width="0.6"/><rect x="729.4" y="470.5" width="6.2" height="12" fill="#fff" stroke="#47535d" stroke-width="1.0"/><path d="M732.50 470.5 V482.5" stroke="#47535d" stroke-width="1.0"/><path d="M729.4 474.50 H735.6" stroke="#47535d" stroke-width="1.0"/><path d="M729.4 478.50 H735.6" stroke="#47535d" stroke-width="1.0"/><rect x="726.2" y="468.5" width="3.4" height="12.2" fill="#0a9a4c"/><path d="M726.2 472.57 H729.6" stroke="#067a3a" stroke-width="0.6"/><path d="M726.2 476.63 H729.6" stroke="#067a3a" stroke-width="0.6"/><rect x="726.3" y="493.4" width="6.2" height="12" fill="#fff" stroke="#47535d" stroke-width="1.0"/><path d="M729.40 493.4 V505.4" stroke="#47535d" stroke-width="1.0"/><path d="M726.3 497.40 H732.5" stroke="#47535d" stroke-width="1.0"/><path d="M726.3 501.40 H732.5" stroke="#47535d" stroke-width="1.0"/><rect x="732.4" y="491.2" width="3.4" height="12.4" fill="#0a9a4c"/><path d="M732.4 495.33 H735.8" stroke="#067a3a" stroke-width="0.6"/><path d="M732.4 499.47 H735.8" stroke="#067a3a" stroke-width="0.6"/><rect x="724.4" y="517.3" width="12.6" height="9.2" fill="#fff" stroke="#47535d" stroke-width="1.0"/><path d="M728.60 517.3 V526.5" stroke="#47535d" stroke-width="1.0"/><path d="M732.80 517.3 V526.5" stroke="#47535d" stroke-width="1.0"/><path d="M724.4 520.37 H737.0" stroke="#47535d" stroke-width="1.0"/><path d="M724.4 523.43 H737.0" stroke="#47535d" stroke-width="1.0"/><rect x="725.8" y="520.3" width="13" height="3.3" fill="#e8404a"/><path d="M730.13 520.3 V523.5999999999999" stroke="#c0303a" stroke-width="0.6"/><path d="M734.47 520.3 V523.5999999999999" stroke="#c0303a" stroke-width="0.6"/><rect x="726.3" y="538.4" width="9.3" height="12.3" fill="#fff" stroke="#47535d" stroke-width="1.0"/><path d="M729.40 538.4 V550.6999999999999" stroke="#47535d" stroke-width="1.0"/><path d="M732.50 538.4 V550.6999999999999" stroke="#47535d" stroke-width="1.0"/><path d="M726.3 542.50 H735.5999999999999" stroke="#47535d" stroke-width="1.0"/><path d="M726.3 546.60 H735.5999999999999" stroke="#47535d" stroke-width="1.0"/><rect x="729.5" y="540.5" width="3.2" height="12" fill="#e8404a"/><path d="M729.5 544.50 H732.7" stroke="#c0303a" stroke-width="0.6"/><path d="M729.5 548.50 H732.7" stroke="#c0303a" stroke-width="0.6"/><g transform="translate(731 631.6) rotate(-40) scale(0.49)"><path d="M3.1 -5.9 H8.27 A5.9 5.9 0 0 1 8.27 5.9 H3.1 M-3.1 5.9 H-8.27 A5.9 5.9 0 0 1 -8.27 -5.9 H-3.1" fill="none" stroke="#47535d" stroke-width="2.1"/><path d="M-5.1 0 H5.1" stroke="#14ad9a" stroke-width="2.2"/></g></svg>
<div style="left:0px;top:0px;width:1435px;height:1px;background:#5c5c5c;"></div>
<div style="left:0px;top:0px;width:1px;height:928px;background:#55555a;"></div>
<div style="left:1433px;top:143px;width:1px;height:784px;background:#f3f4f5;"></div>
<div style="left:1434px;top:0px;width:1px;height:928px;background:#5a5a5a;"></div>
<div style="left:0px;top:927px;width:1435px;height:1px;background:#5a5a5a;"></div>
<span class="t" id="t0" style="top:5.5px;height:20px;line-height:20px;font-size:12.5px;color:#000;font-weight:normal;font-style:normal;letter-spacing:-0.321px;left:30px;">Новый документ 2 - МойОфис Стандартный. Домашняя версия</span>
<span class="t" id="t1" style="top:32.5px;height:20px;line-height:20px;font-size:12.5px;color:#d8f4ef;font-weight:normal;font-style:normal;letter-spacing:-0.3px;transform:scaleX(0.9219);transform-origin:left center;left:9.5px;">Файл</span>
<span class="t" id="t2" style="top:32.5px;height:20px;line-height:20px;font-size:12.5px;color:#d8f4ef;font-weight:normal;font-style:normal;letter-spacing:-0.447px;left:53px;">Правка</span>
<span class="t" id="t3" style="top:32.5px;height:20px;line-height:20px;font-size:12.5px;color:#d8f4ef;font-weight:normal;font-style:normal;letter-spacing:-0.3px;transform:scaleX(0.9177);transform-origin:left center;left:109.5px;">Вставка</span>
<span class="t" id="t4" style="top:32.5px;height:20px;line-height:20px;font-size:12.5px;color:#d8f4ef;font-weight:normal;font-style:normal;letter-spacing:-0.3px;transform:scaleX(0.9672);transform-origin:left center;left:167px;">Формат</span>
<span class="t" id="t5" style="top:32.5px;height:20px;line-height:20px;font-size:12.5px;color:#d8f4ef;font-weight:normal;font-style:normal;letter-spacing:-0.3px;transform:scaleX(0.9424);transform-origin:left center;left:225px;">Таблица</span>
<span class="t" id="t6" style="top:32.5px;height:20px;line-height:20px;font-size:12.5px;color:#d8f4ef;font-weight:normal;font-style:normal;letter-spacing:-0.434px;left:286px;">Данные</span>
<span class="t" id="t7" style="top:32.5px;height:20px;line-height:20px;font-size:12.5px;color:#d8f4ef;font-weight:normal;font-style:normal;letter-spacing:-0.446px;left:345.5px;">Инструменты</span>
<span class="t" id="t8" style="top:32.5px;height:20px;line-height:20px;font-size:12.5px;color:#d8f4ef;font-weight:normal;font-style:normal;letter-spacing:-0.3px;transform:scaleX(0.8856);transform-origin:left center;left:436.5px;">Вид</span>
<span class="t" id="t9" style="top:32.5px;height:20px;line-height:20px;font-size:12.5px;color:#d8f4ef;font-weight:normal;font-style:normal;letter-spacing:-0.317px;left:473px;">Общий доступ</span>
<span class="t" id="t10" style="top:32.5px;height:20px;line-height:20px;font-size:12.5px;color:#d8f4ef;font-weight:normal;font-style:normal;letter-spacing:-0.3px;transform:scaleX(0.942);transform-origin:left center;left:570px;">Справка</span>
<span class="t" id="t11" style="top:123.19999999999999px;height:20px;line-height:20px;font-size:10.8px;color:#707c86;font-weight:normal;font-style:normal;letter-spacing:0.484px;-webkit-text-stroke:0.3px #707c86;left:9.5px;">Файл</span>
<span class="t" id="t12" style="top:123.19999999999999px;height:20px;line-height:20px;font-size:10.8px;color:#707c86;font-weight:normal;font-style:normal;letter-spacing:0.304px;-webkit-text-stroke:0.3px #707c86;left:83px;">Правка</span>
<span class="t" id="t13" style="top:123.19999999999999px;height:20px;line-height:20px;font-size:10.8px;color:#707c86;font-weight:normal;font-style:normal;letter-spacing:0.369px;-webkit-text-stroke:0.3px #707c86;left:268.5px;">Шрифт</span>
<span class="t" id="t14" style="top:123.19999999999999px;height:20px;line-height:20px;font-size:10.8px;color:#707c86;font-weight:normal;font-style:normal;letter-spacing:0.425px;-webkit-text-stroke:0.3px #707c86;left:546.5px;">Выравнивание</span>
<span class="t" id="t15" style="top:123.19999999999999px;height:20px;line-height:20px;font-size:10.8px;color:#707c86;font-weight:normal;font-style:normal;letter-spacing:0.234px;-webkit-text-stroke:0.3px #707c86;left:691.5px;">Число</span>
<span class="t" id="t16" style="top:123.19999999999999px;height:20px;line-height:20px;font-size:10.8px;color:#707c86;font-weight:normal;font-style:normal;letter-spacing:0.457px;-webkit-text-stroke:0.3px #707c86;left:841px;">Ячейки</span>
<span class="t" id="t17" style="top:123.19999999999999px;height:20px;line-height:20px;font-size:10.8px;color:#707c86;font-weight:normal;font-style:normal;letter-spacing:0.398px;-webkit-text-stroke:0.3px #707c86;left:1116px;">Данные</span>
<span class="t" id="t18" style="top:123.19999999999999px;height:20px;line-height:20px;font-size:10.8px;color:#707c86;font-weight:normal;font-style:normal;letter-spacing:0.06px;-webkit-text-stroke:0.3px #707c86;left:1189px;">Вставка</span>
<span class="t" id="t19" style="top:147.8px;height:20px;line-height:20px;font-size:19.5px;color:#59626a;font-weight:normal;font-style:italic;letter-spacing:0.328px;-webkit-text-stroke:0.25px #fff;left:10px;">fx</span>
<span class="t" id="t20" style="top:209.0px;height:20px;line-height:20px;font-size:19.5px;color:#666b70;font-weight:normal;font-style:italic;letter-spacing:0.328px;-webkit-text-stroke:0.2px #eaecee;left:1406.5px;">fx</span>
<span class="t" id="t21" style="top:176.7px;height:20px;line-height:20px;font-size:12.5px;color:#2a2f33;font-weight:normal;font-style:normal;letter-spacing:0px;left:-22.0px;width:200px;text-align:center;">A</span>
<span class="t" id="t22" style="top:176.7px;height:20px;line-height:20px;font-size:12.5px;color:#2a2f33;font-weight:normal;font-style:normal;letter-spacing:0px;left:59.0px;width:200px;text-align:center;">B</span>
<span class="t" id="t23" style="top:176.7px;height:20px;line-height:20px;font-size:12.5px;color:#2a2f33;font-weight:normal;font-style:normal;letter-spacing:0px;left:140.0px;width:200px;text-align:center;">C</span>
<span class="t" id="t24" style="top:176.7px;height:20px;line-height:20px;font-size:12.5px;color:#2a2f33;font-weight:normal;font-style:normal;letter-spacing:0px;left:221.0px;width:200px;text-align:center;">D</span>
<span class="t" id="t25" style="top:176.7px;height:20px;line-height:20px;font-size:12.5px;color:#2a2f33;font-weight:normal;font-style:normal;letter-spacing:0px;left:302.0px;width:200px;text-align:center;">E</span>
<span class="t" id="t26" style="top:176.7px;height:20px;line-height:20px;font-size:12.5px;color:#2a2f33;font-weight:normal;font-style:normal;letter-spacing:0px;left:383.0px;width:200px;text-align:center;">F</span>
<span class="t" id="t27" style="top:176.7px;height:20px;line-height:20px;font-size:12.5px;color:#2a2f33;font-weight:normal;font-style:normal;letter-spacing:0px;left:464.0px;width:200px;text-align:center;">G</span>
<span class="t" id="t28" style="top:176.7px;height:20px;line-height:20px;font-size:12.5px;color:#2a2f33;font-weight:normal;font-style:normal;letter-spacing:0px;left:545.0px;width:200px;text-align:center;">H</span>
<span class="t" id="t29" style="top:176.7px;height:20px;line-height:20px;font-size:12.5px;color:#2a2f33;font-weight:normal;font-style:normal;letter-spacing:0px;left:626.5px;width:200px;text-align:center;">I</span>
<span class="t" id="t30" style="top:176.7px;height:20px;line-height:20px;font-size:12.5px;color:#2a2f33;font-weight:normal;font-style:normal;letter-spacing:0px;left:707.0px;width:200px;text-align:center;">J</span>
<span class="t" id="t31" style="top:176.7px;height:20px;line-height:20px;font-size:12.5px;color:#2a2f33;font-weight:normal;font-style:normal;letter-spacing:0px;left:788.5px;width:200px;text-align:center;">K</span>
<span class="t" id="t32" style="top:176.7px;height:20px;line-height:20px;font-size:12.5px;color:#2a2f33;font-weight:normal;font-style:normal;letter-spacing:0px;left:870.0px;width:200px;text-align:center;">L</span>
<span class="t" id="t33" style="top:176.7px;height:20px;line-height:20px;font-size:12.5px;color:#2a2f33;font-weight:normal;font-style:normal;letter-spacing:0px;left:951.0px;width:200px;text-align:center;">M</span>
<span class="t" id="t34" style="top:176.7px;height:20px;line-height:20px;font-size:12.5px;color:#2a2f33;font-weight:normal;font-style:normal;letter-spacing:0px;left:1032.0px;width:200px;text-align:center;">N</span>
<span class="t" id="t35" style="top:176.7px;height:20px;line-height:20px;font-size:12.5px;color:#2a2f33;font-weight:normal;font-style:normal;letter-spacing:0px;left:1113.0px;width:200px;text-align:center;">O</span>
<span class="t" id="t36" style="top:176.7px;height:20px;line-height:20px;font-size:12.5px;color:#2a2f33;font-weight:normal;font-style:normal;letter-spacing:0px;left:1194.0px;width:200px;text-align:center;">P</span>
<span class="t" id="t37" style="top:202.2px;height:20px;line-height:20px;font-size:12.5px;color:#2a2f33;font-weight:normal;font-style:normal;letter-spacing:0px;left:-80.8px;width:200px;text-align:center;">1</span>
<span class="t" id="t38" style="top:223.2px;height:20px;line-height:20px;font-size:12.5px;color:#2a2f33;font-weight:normal;font-style:normal;letter-spacing:0px;left:-80.8px;width:200px;text-align:center;">2</span>
<span class="t" id="t39" style="top:243.2px;height:20px;line-height:20px;font-size:12.5px;color:#2a2f33;font-weight:normal;font-style:normal;letter-spacing:0px;left:-80.8px;width:200px;text-align:center;">3</span>
<span class="t" id="t40" style="top:263.2px;height:20px;line-height:20px;font-size:12.5px;color:#2a2f33;font-weight:normal;font-style:normal;letter-spacing:0px;left:-80.8px;width:200px;text-align:center;">4</span>
<span class="t" id="t41" style="top:283.2px;height:20px;line-height:20px;font-size:12.5px;color:#2a2f33;font-weight:normal;font-style:normal;letter-spacing:0px;left:-80.8px;width:200px;text-align:center;">5</span>
<span class="t" id="t42" style="top:303.2px;height:20px;line-height:20px;font-size:12.5px;color:#2a2f33;font-weight:normal;font-style:normal;letter-spacing:0px;left:-80.8px;width:200px;text-align:center;">6</span>
<span class="t" id="t43" style="top:323.2px;height:20px;line-height:20px;font-size:12.5px;color:#2a2f33;font-weight:normal;font-style:normal;letter-spacing:0px;left:-80.8px;width:200px;text-align:center;">7</span>
<span class="t" id="t44" style="top:343.2px;height:20px;line-height:20px;font-size:12.5px;color:#2a2f33;font-weight:normal;font-style:normal;letter-spacing:0px;left:-80.8px;width:200px;text-align:center;">8</span>
<span class="t" id="t45" style="top:363.2px;height:20px;line-height:20px;font-size:12.5px;color:#2a2f33;font-weight:normal;font-style:normal;letter-spacing:0px;left:-80.8px;width:200px;text-align:center;">9</span>
<span class="t" id="t46" style="top:383.2px;height:20px;line-height:20px;font-size:12.5px;color:#2a2f33;font-weight:normal;font-style:normal;letter-spacing:0px;letter-spacing:-0.7px;left:-80.8px;width:200px;text-align:center;">10</span>
<span class="t" id="t47" style="top:403.2px;height:20px;line-height:20px;font-size:12.5px;color:#2a2f33;font-weight:normal;font-style:normal;letter-spacing:0px;letter-spacing:-0.7px;left:-80.8px;width:200px;text-align:center;">11</span>
<span class="t" id="t48" style="top:423.2px;height:20px;line-height:20px;font-size:12.5px;color:#2a2f33;font-weight:normal;font-style:normal;letter-spacing:0px;letter-spacing:-0.7px;left:-80.8px;width:200px;text-align:center;">12</span>
<span class="t" id="t49" style="top:443.2px;height:20px;line-height:20px;font-size:12.5px;color:#2a2f33;font-weight:normal;font-style:normal;letter-spacing:0px;letter-spacing:-0.7px;left:-80.8px;width:200px;text-align:center;">13</span>
<span class="t" id="t50" style="top:463.2px;height:20px;line-height:20px;font-size:12.5px;color:#2a2f33;font-weight:normal;font-style:normal;letter-spacing:0px;letter-spacing:-0.7px;left:-80.8px;width:200px;text-align:center;">14</span>
<span class="t" id="t51" style="top:483.2px;height:20px;line-height:20px;font-size:12.5px;color:#2a2f33;font-weight:normal;font-style:normal;letter-spacing:0px;letter-spacing:-0.7px;left:-80.8px;width:200px;text-align:center;">15</span>
<span class="t" id="t52" style="top:503.20000000000005px;height:20px;line-height:20px;font-size:12.5px;color:#2a2f33;font-weight:normal;font-style:normal;letter-spacing:0px;letter-spacing:-0.7px;left:-80.8px;width:200px;text-align:center;">16</span>
<span class="t" id="t53" style="top:523.2px;height:20px;line-height:20px;font-size:12.5px;color:#2a2f33;font-weight:normal;font-style:normal;letter-spacing:0px;letter-spacing:-0.7px;left:-80.8px;width:200px;text-align:center;">17</span>
<span class="t" id="t54" style="top:543.2px;height:20px;line-height:20px;font-size:12.5px;color:#2a2f33;font-weight:normal;font-style:normal;letter-spacing:0px;letter-spacing:-0.7px;left:-80.8px;width:200px;text-align:center;">18</span>
<span class="t" id="t55" style="top:563.2px;height:20px;line-height:20px;font-size:12.5px;color:#2a2f33;font-weight:normal;font-style:normal;letter-spacing:0px;letter-spacing:-0.7px;left:-80.8px;width:200px;text-align:center;">19</span>
<span class="t" id="t56" style="top:583.2px;height:20px;line-height:20px;font-size:12.5px;color:#2a2f33;font-weight:normal;font-style:normal;letter-spacing:0px;letter-spacing:-0.7px;left:-80.8px;width:200px;text-align:center;">20</span>
<span class="t" id="t57" style="top:603.2px;height:20px;line-height:20px;font-size:12.5px;color:#2a2f33;font-weight:normal;font-style:normal;letter-spacing:0px;letter-spacing:-0.7px;left:-80.8px;width:200px;text-align:center;">21</span>
<span class="t" id="t58" style="top:623.2px;height:20px;line-height:20px;font-size:12.5px;color:#2a2f33;font-weight:normal;font-style:normal;letter-spacing:0px;letter-spacing:-0.7px;left:-80.8px;width:200px;text-align:center;">22</span>
<span class="t" id="t59" style="top:643.2px;height:20px;line-height:20px;font-size:12.5px;color:#2a2f33;font-weight:normal;font-style:normal;letter-spacing:0px;letter-spacing:-0.7px;left:-80.8px;width:200px;text-align:center;">23</span>
<span class="t" id="t60" style="top:663.2px;height:20px;line-height:20px;font-size:12.5px;color:#2a2f33;font-weight:normal;font-style:normal;letter-spacing:0px;letter-spacing:-0.7px;left:-80.8px;width:200px;text-align:center;">24</span>
<span class="t" id="t61" style="top:683.2px;height:20px;line-height:20px;font-size:12.5px;color:#2a2f33;font-weight:normal;font-style:normal;letter-spacing:0px;letter-spacing:-0.7px;left:-80.8px;width:200px;text-align:center;">25</span>
<span class="t" id="t62" style="top:703.2px;height:20px;line-height:20px;font-size:12.5px;color:#2a2f33;font-weight:normal;font-style:normal;letter-spacing:0px;letter-spacing:-0.7px;left:-80.8px;width:200px;text-align:center;">26</span>
<span class="t" id="t63" style="top:723.2px;height:20px;line-height:20px;font-size:12.5px;color:#2a2f33;font-weight:normal;font-style:normal;letter-spacing:0px;letter-spacing:-0.7px;left:-80.8px;width:200px;text-align:center;">27</span>
<span class="t" id="t64" style="top:743.2px;height:20px;line-height:20px;font-size:12.5px;color:#2a2f33;font-weight:normal;font-style:normal;letter-spacing:0px;letter-spacing:-0.7px;left:-80.8px;width:200px;text-align:center;">28</span>
<span class="t" id="t65" style="top:763.2px;height:20px;line-height:20px;font-size:12.5px;color:#2a2f33;font-weight:normal;font-style:normal;letter-spacing:0px;letter-spacing:-0.7px;left:-80.8px;width:200px;text-align:center;">29</span>
<span class="t" id="t66" style="top:783.2px;height:20px;line-height:20px;font-size:12.5px;color:#2a2f33;font-weight:normal;font-style:normal;letter-spacing:0px;letter-spacing:-0.7px;left:-80.8px;width:200px;text-align:center;">30</span>
<span class="t" id="t67" style="top:803.2px;height:20px;line-height:20px;font-size:12.5px;color:#2a2f33;font-weight:normal;font-style:normal;letter-spacing:0px;letter-spacing:-0.7px;left:-80.8px;width:200px;text-align:center;">31</span>
<span class="t" id="t68" style="top:823.2px;height:20px;line-height:20px;font-size:12.5px;color:#2a2f33;font-weight:normal;font-style:normal;letter-spacing:0px;letter-spacing:-0.7px;left:-80.8px;width:200px;text-align:center;">32</span>
<span class="t" id="t69" style="top:874.0px;height:20px;line-height:20px;font-size:13px;color:#fff;font-weight:bold;font-style:normal;letter-spacing:-0.3px;transform:scaleX(0.9251);transform-origin:center center;left:-6px;width:200px;text-align:center;">Лист1</span>
<span class="t" id="t70" style="top:903.0px;height:20px;line-height:20px;font-size:11.5px;color:#3c444b;font-weight:normal;font-style:normal;letter-spacing:-0.3px;transform:scaleX(0.9402);transform-origin:left center;left:866.5px;">СУММ</span>
<span class="t" id="t71" style="top:903.0px;height:20px;line-height:20px;font-size:12px;color:#222a30;font-weight:bold;font-style:normal;letter-spacing:-0.188px;left:907px;">0</span>
<span class="t" id="t72" style="top:903.0px;height:20px;line-height:20px;font-size:11.5px;color:#3c444b;font-weight:normal;font-style:normal;letter-spacing:-0.3px;transform:scaleX(0.922);transform-origin:left center;left:924px;">СРЗНАЧ</span>
<span class="t" id="t73" style="top:903.0px;height:20px;line-height:20px;font-size:12px;color:#222a30;font-weight:bold;font-style:normal;letter-spacing:-0.188px;left:973px;">0</span>
<span class="t" id="t74" style="top:903.0px;height:20px;line-height:20px;font-size:11.5px;color:#3c444b;font-weight:normal;font-style:normal;letter-spacing:-0.3px;transform:scaleX(0.9779);transform-origin:left center;left:990.5px;">МИН</span>
<span class="t" id="t75" style="top:903.0px;height:20px;line-height:20px;font-size:12px;color:#222a30;font-weight:bold;font-style:normal;letter-spacing:-0.188px;left:1024px;">0</span>
<span class="t" id="t76" style="top:903.0px;height:20px;line-height:20px;font-size:11.5px;color:#3c444b;font-weight:normal;font-style:normal;letter-spacing:-0.3px;transform:scaleX(0.9124);transform-origin:left center;left:1041.5px;">МАКС</span>
<span class="t" id="t77" style="top:903.0px;height:20px;line-height:20px;font-size:12px;color:#222a30;font-weight:bold;font-style:normal;letter-spacing:-0.188px;left:1079px;">0</span>
<span class="t" id="t78" style="top:903.0px;height:20px;line-height:20px;font-size:11.5px;color:#3c444b;font-weight:normal;font-style:normal;letter-spacing:-0.3px;transform:scaleX(0.8772);transform-origin:left center;left:1096px;">СЧЁТЗ</span>
<span class="t" id="t79" style="top:903.0px;height:20px;line-height:20px;font-size:12px;color:#222a30;font-weight:bold;font-style:normal;letter-spacing:-0.188px;left:1136px;">0</span>
<span class="t" id="t80" style="top:903.5px;height:20px;line-height:20px;font-size:12px;color:#222a30;font-weight:normal;font-style:normal;letter-spacing:-0.3px;transform:scaleX(0.8893);transform-origin:left center;left:1356px;">100%</span>
<span class="t" id="t81" style="top:296.2px;height:20px;line-height:20px;font-size:12.5px;color:#151515;font-weight:normal;font-style:normal;letter-spacing:-0.3px;transform:scaleX(0.9439);transform-origin:left center;left:752.3px;">Вырезать</span>
<span class="t" id="t82" style="top:296.2px;height:20px;line-height:20px;font-size:12.5px;color:#151515;font-weight:normal;font-style:normal;letter-spacing:-0.416px;left:971px;">Ctrl+X</span>
<span class="t" id="t83" style="top:319.2px;height:20px;line-height:20px;font-size:12.5px;color:#151515;font-weight:normal;font-style:normal;letter-spacing:-0.256px;left:752.3px;">Копировать</span>
<span class="t" id="t84" style="top:319.2px;height:20px;line-height:20px;font-size:12.5px;color:#151515;font-weight:normal;font-style:normal;letter-spacing:-0.453px;left:971px;">Ctrl+C</span>
<span class="t" id="t85" style="top:342.2px;height:20px;line-height:20px;font-size:12.5px;color:#151515;font-weight:normal;font-style:normal;letter-spacing:-0.3px;transform:scaleX(0.9333);transform-origin:left center;left:752.3px;">Вставить</span>
<span class="t" id="t86" style="top:342.2px;height:20px;line-height:20px;font-size:12.5px;color:#151515;font-weight:normal;font-style:normal;letter-spacing:-0.416px;left:971px;">Ctrl+V</span>
<span class="t" id="t87" style="top:365.2px;height:20px;line-height:20px;font-size:12.5px;color:#151515;font-weight:normal;font-style:normal;letter-spacing:-0.3px;transform:scaleX(0.9688);transform-origin:left center;left:752.3px;">Вставить значение</span>
<span class="t" id="t88" style="top:365.2px;height:20px;line-height:20px;font-size:12.5px;color:#151515;font-weight:normal;font-style:normal;letter-spacing:-0.053px;left:971px;">Ctrl+Alt+V</span>
<span class="t" id="t89" style="top:388.2px;height:20px;line-height:20px;font-size:12.5px;color:#151515;font-weight:normal;font-style:normal;letter-spacing:-0.458px;left:752.3px;">Вставить неформатированный текст</span>
<span class="t" id="t90" style="top:420.2px;height:20px;line-height:20px;font-size:12.5px;color:#151515;font-weight:normal;font-style:normal;letter-spacing:-0.436px;left:752.3px;">Вставить строку выше</span>
<span class="t" id="t91" style="top:420.2px;height:20px;line-height:20px;font-size:12.5px;color:#151515;font-weight:normal;font-style:normal;letter-spacing:0.065px;left:971px;">Alt+A</span>
<span class="t" id="t92" style="top:443.2px;height:20px;line-height:20px;font-size:12.5px;color:#151515;font-weight:normal;font-style:normal;letter-spacing:-0.362px;left:752.3px;">Вставить строку ниже</span>
<span class="t" id="t93" style="top:443.2px;height:20px;line-height:20px;font-size:12.5px;color:#151515;font-weight:normal;font-style:normal;letter-spacing:-0.06px;left:971px;">Alt+B</span>
<span class="t" id="t94" style="top:466.2px;height:20px;line-height:20px;font-size:12.5px;color:#151515;font-weight:normal;font-style:normal;letter-spacing:-0.3px;transform:scaleX(0.9515);transform-origin:left center;left:752.3px;">Вставить столбец слева</span>
<span class="t" id="t95" style="top:466.2px;height:20px;line-height:20px;font-size:12.5px;color:#151515;font-weight:normal;font-style:normal;letter-spacing:0.04px;left:971px;">Alt+L</span>
<span class="t" id="t96" style="top:489.2px;height:20px;line-height:20px;font-size:12.5px;color:#151515;font-weight:normal;font-style:normal;letter-spacing:-0.3px;transform:scaleX(0.967);transform-origin:left center;left:752.3px;">Вставить столбец справа</span>
<span class="t" id="t97" style="top:489.2px;height:20px;line-height:20px;font-size:12.5px;color:#151515;font-weight:normal;font-style:normal;letter-spacing:-0.231px;left:971px;">Alt+R</span>
<span class="t" id="t98" style="top:512.1999999999999px;height:20px;line-height:20px;font-size:12.5px;color:#151515;font-weight:normal;font-style:normal;letter-spacing:-0.419px;left:752.3px;">Удалить строку</span>
<span class="t" id="t99" style="top:535.1999999999999px;height:20px;line-height:20px;font-size:12.5px;color:#151515;font-weight:normal;font-style:normal;letter-spacing:-0.3px;transform:scaleX(0.9687);transform-origin:left center;left:752.3px;">Удалить столбец</span>
<span class="t" id="t100" style="top:567.1999999999999px;height:20px;line-height:20px;font-size:12.5px;color:#151515;font-weight:normal;font-style:normal;letter-spacing:-0.408px;left:752.3px;">Печать выделенной области...</span>
<span class="t" id="t101" style="top:599.1999999999999px;height:20px;line-height:20px;font-size:12.5px;color:#151515;font-weight:normal;font-style:normal;letter-spacing:-0.474px;left:752.3px;">Добавить заметку</span>
<span class="t" id="t102" style="top:622.1999999999999px;height:20px;line-height:20px;font-size:12.5px;color:#151515;font-weight:normal;font-style:normal;letter-spacing:-0.457px;left:752.3px;">Вставить ссылку...</span>
<span class="t" id="t103" style="top:654.1999999999999px;height:20px;line-height:20px;font-size:12.5px;color:#151515;font-weight:normal;font-style:normal;letter-spacing:-0.446px;left:752.3px;">Числовой формат...</span>
</div></body></html>
